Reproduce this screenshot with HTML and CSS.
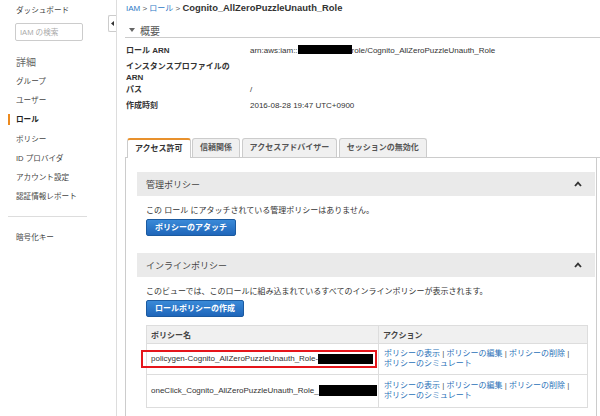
FILE: index.html
```html
<!DOCTYPE html>
<html lang="ja">
<head>
<meta charset="utf-8">
<title>IAM ロール</title>
<link rel="stylesheet" href="styles.css">
</head>
<body>
<div class="page">
  <aside class="sidebar">
    <div class="sb-dash">ダッシュボード</div>
    <input class="sb-search" type="text" placeholder="IAM の検索">
    <div class="sb-head">詳細</div>
    <ul class="sb-list">
      <li class="sb-item">グループ</li>
      <li class="sb-item">ユーザー</li>
      <li class="sb-item active">ロール</li>
      <li class="sb-item">ポリシー</li>
      <li class="sb-item">ID プロバイダ</li>
      <li class="sb-item">アカウント設定</li>
      <li class="sb-item">認証情報レポート</li>
    </ul>
    <hr class="sb-sep">
    <ul class="sb-list sb-list2">
      <li class="sb-item">暗号化キー</li>
    </ul>
    <div class="collapse"><svg width="3" height="5" viewBox="0 0 3 5"><polygon points="3,0 0,2.5 3,5" fill="#333"/></svg></div>
  </aside>
  <main class="main">
    <div class="crumbs"><a class="crumb-link">IAM</a><span class="sep"> &gt; </span><a class="crumb-link">ロール</a><span class="sep"> &gt; </span><span class="crumb-cur">Cognito_AllZeroPuzzleUnauth_Role</span></div>
    <div class="title"><svg class="caret" width="6" height="4" viewBox="0 0 6 4"><polygon points="0,0 6,0 3,4" fill="#666"/></svg><span>概要</span></div>
    <div class="summary">
      <div class="row r1"><div class="k">ロール ARN</div><div class="v">arn:aws:iam::<span class="redact r-arn"></span>role/Cognito_AllZeroPuzzleUnauth_Role</div></div>
      <div class="row r2"><div class="k">インスタンスプロファイルの ARN</div><div class="v"></div></div>
      <div class="row r3"><div class="k">パス</div><div class="v">/</div></div>
      <div class="row"><div class="k">作成時刻</div><div class="v">2016-08-28 19:47 UTC+0900</div></div>
    </div>
    <div class="tabs">
      <div class="tab active">アクセス許可</div>
      <div class="tab">信頼関係</div>
      <div class="tab">アクセスアドバイザー</div>
      <div class="tab">セッションの無効化</div>
    </div>
    <div class="panel">
      <section class="box">
        <div class="box-head"><span>管理ポリシー</span><svg width="8" height="6" viewBox="0 0 8 6"><polyline points="1,5 4,1.6 7,5" fill="none" stroke="#333" stroke-width="1.8"/></svg></div>
        <div class="box-body">
          <p class="desc">この ロール にアタッチされている管理ポリシーはありません。</p>
          <button class="btn">ポリシーのアタッチ</button>
        </div>
      </section>
      <section class="box">
        <div class="box-head"><span>インラインポリシー</span><svg width="8" height="6" viewBox="0 0 8 6"><polyline points="1,5 4,1.6 7,5" fill="none" stroke="#333" stroke-width="1.8"/></svg></div>
        <div class="box-body">
          <p class="desc">このビューでは、このロールに組み込まれているすべてのインラインポリシーが表示されます。</p>
          <button class="btn">ロールポリシーの作成</button>
          <div class="tbl-wrap">
            <table class="tbl">
              <thead>
                <tr><th class="c-name">ポリシー名</th><th>アクション</th></tr>
              </thead>
              <tbody>
                <tr class="row-a">
                  <td class="c-name">policygen-Cognito_AllZeroPuzzleUnauth_Role-<span class="redact r1b"></span></td>
                  <td class="acts"><a class="act">ポリシーの表示</a> | <a class="act">ポリシーの編集</a> | <a class="act">ポリシーの削除</a> | <a class="act">ポリシーのシミュレート</a></td>
                </tr>
                <tr class="row-b">
                  <td class="c-name">oneClick_Cognito_AllZeroPuzzleUnauth_Role_<span class="redact r2b"></span></td>
                  <td class="acts"><a class="act">ポリシーの表示</a> | <a class="act">ポリシーの編集</a> | <a class="act">ポリシーの削除</a> | <a class="act">ポリシーのシミュレート</a></td>
                </tr>
              </tbody>
            </table>
            <div class="highlight"></div>
          </div>
        </div>
      </section>
    </div>
  </main>
</div>
</body>
</html>
```
FILE: styles.css
```css
html, body {
  margin: 0;
  padding: 0;
  height: 416px;
  overflow: hidden;
  background: #fff;
}
body {
  font-family: "Liberation Sans", "Noto Sans CJK JP", sans-serif;
  font-size: 8px;
  color: #333;
}
.page {
  display: flex;
  height: 416px;
}

/* sidebar */
.sidebar {
  position: relative;
  flex: none;
  width: 116px;
  border-right: 1px solid #ddd;
}
.sb-dash {
  padding: 5px 0 0 16px;
  line-height: 12px;
  font-size: 7.6px;
  color: #444;
}
.sb-search {
  display: block;
  box-sizing: border-box;
  margin: 6px 0 0 15px;
  width: 68px;
  height: 18px;
  border: 1px solid #ccc;
  border-radius: 2px;
  padding: 0 0 0 4px;
  font-family: inherit;
  font-size: 7.6px;
  color: #333;
  background: #fff;
  outline: none;
}
.sb-search::placeholder {
  color: #aaa;
}
.sb-head {
  margin-top: 15px;
  padding-left: 16px;
  line-height: 14px;
  font-size: 10px;
  color: #666;
}
.sb-list {
  list-style: none;
  margin: 2px 0 0;
  padding: 0;
}
.sb-item {
  height: 19.2px;
  line-height: 19.2px;
  padding-left: 16px;
  font-size: 7.6px;
  color: #444;
}
.sb-item.active {
  font-weight: bold;
  color: #222;
  background: linear-gradient(#ec8a1f, #ec8a1f) 8px 4px / 2px 11px no-repeat;
}
.sb-sep {
  margin: 10px 29px 0 8px;
  border: 0;
  border-top: 1px solid #ddd;
  height: 0;
}
.sb-list2 {
  margin-top: 11px;
}
.collapse {
  position: absolute;
  left: 108px;
  top: 15px;
  width: 8px;
  height: 17px;
  box-sizing: border-box;
  border: 1px solid #ccc;
  border-right: 0;
  border-radius: 2px 0 0 2px;
  background: #fff;
  display: flex;
  align-items: center;
  justify-content: center;
}

/* main */
.main {
  flex: 1;
  min-width: 0;
  padding-left: 8px;
}
.crumbs {
  padding: 2px 0 0 1px;
  line-height: 12px;
  font-size: 8px;
  white-space: nowrap;
}
.crumb-link {
  color: #2f7ac6;
}
.crumbs .sep {
  color: #555;
}
.crumb-cur {
  font-weight: bold;
  font-size: 9.4px;
  color: #333;
}
.title {
  margin-top: 8px;
  height: 14px;
  border-bottom: 1px solid #ccc;
  display: flex;
  align-items: center;
  gap: 5px;
  padding-left: 4px;
  font-size: 10px;
  color: #555;
}
.caret {
  flex: none;
}
.summary {
  margin-top: 6.5px;
  padding-left: 1px;
}
.row {
  display: flex;
  line-height: 11px;
}
.row.r1 {
  margin-bottom: 5px;
}
.row.r2 {
  margin-bottom: 1px;
}
.row.r3 {
  margin-bottom: 5px;
}
.k {
  flex: none;
  width: 110px;
  padding-right: 14px;
  font-weight: bold;
  color: #333;
}
.v {
  color: #333;
  white-space: nowrap;
}
.redact {
  display: inline-block;
  background: #000;
  vertical-align: middle;
}
.r-arn {
  width: 54px;
  height: 9px;
  margin-top: -2px;
}

/* tabs */
.tabs {
  margin-top: 27.5px;
  display: flex;
  gap: 1.5px;
  padding-left: 2px;
  border-bottom: 1px solid #ccc;
  height: 19px;
  align-items: flex-end;
}
.tab {
  padding: 0 7px;
  line-height: 18px;
  border: 1px solid #ccc;
  border-bottom: 0;
  border-radius: 3px 3px 0 0;
  background: #f0f0f0;
  font-weight: bold;
  color: #555;
  white-space: nowrap;
}
.tab.active {
  border-top: 2px solid #e8912d;
  line-height: 18px;
  background: #fff;
  color: #333;
  margin-bottom: -1px;
  position: relative;
}

/* panel */
.panel {
  margin-right: 3px;
  border-left: 1px solid #ccc;
  border-right: 1px solid #ccc;
  padding: 14px 1px 40px 11px;
}
.box-head {
  height: 24px;
  background: #eaeaea;
  display: flex;
  align-items: center;
  justify-content: space-between;
  padding: 0 13px 0 9px;
  font-size: 9px;
  color: #444;
}
.box-body {
  padding: 8.5px 7px 17px 9px;
}
.desc {
  margin: 0;
  line-height: 11px;
  color: #333;
  white-space: nowrap;
}
.btn {
  display: block;
  margin-top: 3.5px;
  height: 17px;
  box-sizing: border-box;
  padding: 0 8px;
  border: 1px solid #1b5aa0;
  border-radius: 2px;
  background: linear-gradient(#3a8ad8, #1f66ba);
  color: #fff;
  font-family: inherit;
  font-size: 8px;
  font-weight: bold;
  line-height: 15px;
}

/* table */
.tbl-wrap {
  position: relative;
  margin-top: 8px;
}
.tbl {
  width: 100%;
  border-collapse: collapse;
  border: 1px solid #ddd;
}
.tbl th {
  height: 18px;
  padding: 0 4px;
  background: #f0f0f0;
  border: 1px solid #ddd;
  text-align: left;
  font-weight: bold;
  color: #444;
  box-sizing: border-box;
}
.tbl th.c-name,
.tbl td.c-name {
  width: 232px;
  box-sizing: border-box;
}
.tbl td {
  border: 1px solid #ddd;
  padding: 4.5px 6px 4.5px 4px;
  line-height: 10.5px;
  vertical-align: middle;
  color: #333;
}
.tbl td.c-name {
  white-space: nowrap;
  padding-right: 1px;
}
.tbl td.acts {
  padding-left: 5px;
  color: #555;
}
.row-b td {
  padding-top: 5.5px;
  padding-bottom: 5.5px;
}
.act {
  color: #2a71b8;
  white-space: nowrap;
}
.r1b {
  width: 55px;
  height: 10px;
}
.r2b {
  width: 58px;
  height: 11px;
}
.highlight {
  position: absolute;
  left: -5px;
  top: 25px;
  width: 236px;
  height: 18px;
  box-sizing: border-box;
  border: 2px solid #e5151b;
}
```
